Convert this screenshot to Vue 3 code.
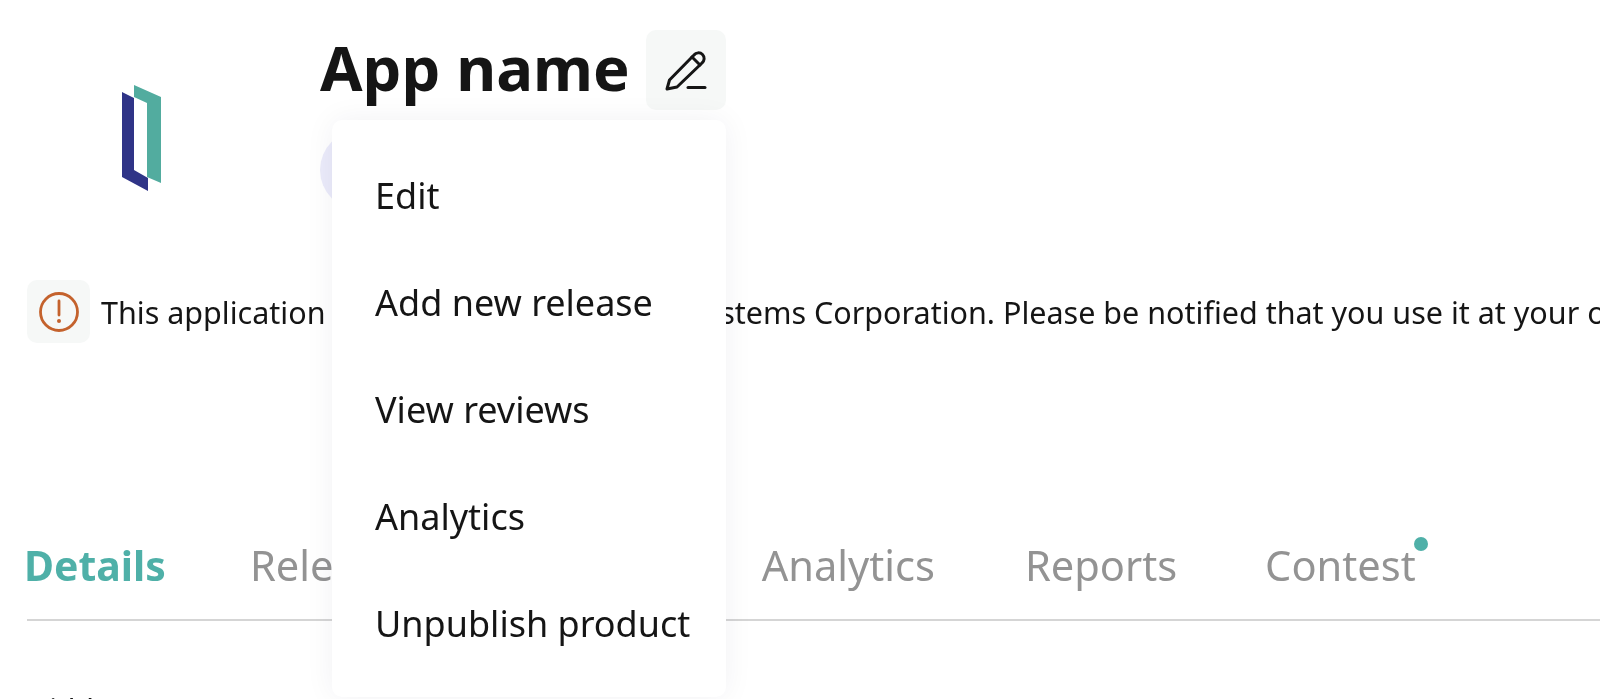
<script setup>
const menu = ['Edit', 'Add new release', 'View reviews', 'Analytics', 'Unpublish product']
const tabs = ['Details', 'Releases', 'Reviews', 'Analytics', 'Reports', 'Contest']
</script>

<template>
  <div class="page">
    <header class="head">
      <svg class="logo" width="41" height="106" viewBox="121 85 41 106">
        <polygon points="134,85 161,97 161,183 147,177 147,103 134,97" fill="#52ac9f" />
        <polygon points="122,92 134,98 134,170 148,178 148,191 122,177" fill="#2f3487" />
      </svg>
      <div class="info">
        <div class="title-row">
          <h1>App name</h1>
          <button class="icon-btn" aria-label="Edit">
            <svg width="46" height="46" viewBox="0 0 46 46" fill="none" stroke="#151515" stroke-width="3" stroke-linecap="round" stroke-linejoin="round">
              <path d="M4 42 L6.5 33 L31 8 C33 5.5 37 5 39.5 7.5 C42 10 41.5 14 39 16 L14 40 Z" />
              <path d="M29 10 L37 18" />
              <path d="M25 40.5 H42" />
            </svg>
          </button>
        </div>
        <div class="avatar"></div>
      </div>
    </header>

    <div class="notice">
      <span class="notice-icon">
        <svg width="42" height="42" viewBox="0 0 42 42" fill="none" stroke="#c4622d">
          <circle cx="21" cy="21" r="18.5" stroke-width="2.8" />
          <path d="M21 10 V24" stroke-width="2.8" stroke-linecap="round" />
          <circle cx="21" cy="30" r="2" fill="#c4622d" stroke="none" />
        </svg>
      </span>
      <p>This application is not certified by Oracle Systems Corporation. Please be notified that you use it at your own risk.</p>
    </div>

    <nav class="tabs">
      <a v-for="(t, i) in tabs" :key="t" class="tab" :class="{ active: i === 0, dotted: t === 'Contest' }">{{ t }}</a>
    </nav>

    <div class="stub">Hidden</div>

    <ul class="menu">
      <li v-for="m in menu" :key="m">{{ m }}</li>
    </ul>
  </div>
</template>

<style>
html, body { margin: 0; background: #fff; overflow: hidden; }
</style>

<style scoped>
.page {
  position: relative;
  width: 1600px;
  height: 699px;
  overflow: hidden;
  background: #fff;
  font-family: "Noto Sans", "Open Sans", sans-serif;
  color: #151515;
  filter: blur(0.5px);
}
.head {
  display: flex;
  height: 280px;
  box-sizing: border-box;
  padding-top: 30px;
}
.logo {
  margin: 55px 0 0 121px;
  flex: none;
}
.info {
  margin-left: 158px;
  display: flex;
  flex-direction: column;
}
.title-row {
  display: flex;
  align-items: center;
  gap: 16px;
  height: 80px;
}
h1 {
  margin: -6px 0 0;
  font-size: 61.5px;
  line-height: 79px;
  font-weight: 700;
}
.icon-btn {
  width: 80px;
  height: 80px;
  border: 0;
  padding: 0;
  border-radius: 10px;
  background: #f6f8f7;
  display: flex;
  align-items: center;
  justify-content: center;
}
.avatar {
  width: 80px;
  height: 80px;
  border-radius: 50%;
  background: #ebebfa;
  margin-top: 20px;
}
.notice {
  display: flex;
  align-items: center;
  gap: 11px;
  margin-left: 27px;
  height: 63px;
}
.notice-icon {
  width: 63px;
  height: 63px;
  flex: none;
  border-radius: 10px;
  background: #f6f8f7;
  display: flex;
  align-items: center;
  justify-content: center;
}
.notice p {
  margin: 0;
  font-size: 30.5px;
  white-space: nowrap;
}
.tabs {
  display: flex;
  gap: 88px;
  margin: 182px 0 0 27px;
  height: 96px;
  padding-top: 12px;
  border-bottom: 2px solid #d5d5d5;
  box-sizing: border-box;
}
.tab {
  position: relative;
  font-size: 41.6px;
  line-height: 56px;
  color: #939393;
  height: 56px;
}
.tab:nth-child(3) {
  padding-right: 10px;
}
.tab:nth-child(5) {
  margin-left: 2px;
}
.tab.active {
  color: #4fb0a8;
  font-weight: 700;
  font-size: 41px;
  margin: 0 -4px 0 -3px;
}
.tab.dotted::after {
  content: "";
  position: absolute;
  right: -12px;
  top: 0;
  width: 14px;
  height: 14px;
  border-radius: 50%;
  background: #4fb0a8;
}
.stub {
  margin: 69px 0 0 27px;
  font-size: 30px;
  line-height: 40px;
}
.menu {
  position: absolute;
  left: 332px;
  top: 120px;
  width: 394px;
  height: 577px;
  box-sizing: border-box;
  margin: 0;
  padding: 22px 0 0 43px;
  list-style: none;
  background: #fff;
  border-radius: 10px;
  box-shadow: 0 0 30px rgba(40, 40, 70, 0.06);
}
.menu li {
  font-size: 36px;
  line-height: 107px;
  white-space: nowrap;
}
</style>
